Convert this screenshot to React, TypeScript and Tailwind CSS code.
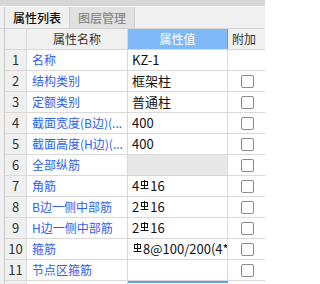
import React from "react";

const Rebar = () => (
  <svg width="9" height="10" viewBox="0 0 9 10" className="inline-block mx-[1px] align-[1px]" fill="none" stroke="#111" strokeWidth="1">
    <rect x="1.5" y="1.5" width="6" height="4" />
    <line x1="4.5" y1="0" x2="4.5" y2="9" />
    <line x1="0.5" y1="8.5" x2="8.5" y2="8.5" />
  </svg>
);

type Row = { n: number; name: string; value: React.ReactNode; check: boolean; gray?: boolean };

const rows: Row[] = [
  { n: 1, name: "名称", value: "KZ-1", check: false },
  { n: 2, name: "结构类别", value: "框架柱", check: true },
  { n: 3, name: "定额类别", value: "普通柱", check: true },
  { n: 4, name: "截面宽度(B边)(...", value: "400", check: true },
  { n: 5, name: "截面高度(H边)(...", value: "400", check: true },
  { n: 6, name: "全部纵筋", value: "", check: true, gray: true },
  { n: 7, name: "角筋", value: <>4<Rebar />16</>, check: true },
  { n: 8, name: "B边一侧中部筋", value: <>2<Rebar />16</>, check: true },
  { n: 9, name: "H边一侧中部筋", value: <>2<Rebar />16</>, check: true },
  { n: 10, name: "箍筋", value: <><Rebar />8@100/200(4*</>, check: true },
  { n: 11, name: "节点区箍筋", value: "", check: true },
];

export default function App() {
  return (
    <div className="w-[265px] h-[284px] overflow-hidden bg-[#f0f0f0] text-[12px] leading-[20px] font-['Noto_Sans_CJK_SC',sans-serif] text-[#111] flex flex-col">
      <div className="h-[6px] shrink-0 bg-[#d6d6d6]" />
      <div className="h-px shrink-0 bg-[#f7f7f7]" />
      <div className="flex h-[22px] shrink-0 border-b border-[#d4d4d4]">
        <div className="w-[5px] shrink-0 border-r border-[#c8c8c8]" />
        <div className="w-[65px] shrink-0 flex items-center justify-center text-[12px] font-medium text-[#111] border-r border-[#d0d0d0]">属性列表</div>
        <div className="w-[65px] shrink-0 flex items-center justify-center text-[12px] font-medium text-[#8a8a8a] bg-[#e1e1e1] border-r border-[#cfcfcf]">图层管理</div>
      </div>
      <div className="flex shrink-0">
        <div className="w-[5px] shrink-0 border-r border-[#c8c8c8]" />
        <div className="flex flex-col flex-1 min-w-0">
          <div className="flex h-[21px] shrink-0 border-b border-[#d9d9d9]">
            <div className="w-[22px] shrink-0 border-r border-[#d9d9d9]" />
            <div className="w-[101px] shrink-0 border-r border-[#d9d9d9] flex items-center justify-center text-[#333]">属性名称</div>
            <div className="w-[100px] shrink-0 bg-[#80b9f5] border-r border-[#5d9fe6] flex items-center justify-center text-white">属性值</div>
            <div className="flex-1 flex items-center pl-[4px] text-[#333] whitespace-nowrap">附加</div>
          </div>
          {rows.map((r) => (
            <div key={r.n} className="flex h-[21px] shrink-0 border-b border-[#d9d9d9]">
              <div className="w-[22px] shrink-0 border-r border-[#d9d9d9] flex items-center justify-center text-[13px] text-[#333]">{r.n}</div>
              <div className="w-[101px] shrink-0 border-r border-[#d9d9d9] bg-white pl-[5px] text-[#2f5fe8] whitespace-nowrap overflow-hidden">
                {r.name}
              </div>
              <div className={`w-[100px] shrink-0 border-r border-[#d9d9d9] pl-[4px] overflow-hidden whitespace-nowrap text-[13px] ${r.gray ? "bg-[#e8e8e8]" : "bg-white"}`}>
                {r.value}
              </div>
              <div className="flex-1 bg-white flex items-center pl-[13px]">
                {r.check && <div className="w-[13px] h-[13px] shrink-0 rounded-[2px] border border-[#8a8a8a] bg-white" />}
              </div>
            </div>
          ))}
          <div className="flex h-[21px] shrink-0">
            <div className="w-[22px] shrink-0 border-r border-[#d9d9d9]" />
            <div className="w-[101px] shrink-0 border-r border-[#d9d9d9] bg-white" />
            <div className="w-[100px] shrink-0 border-t-2 border-[#5fa3e8] bg-white" />
            <div className="flex-1 bg-white" />
          </div>
        </div>
      </div>
    </div>
  );
}
